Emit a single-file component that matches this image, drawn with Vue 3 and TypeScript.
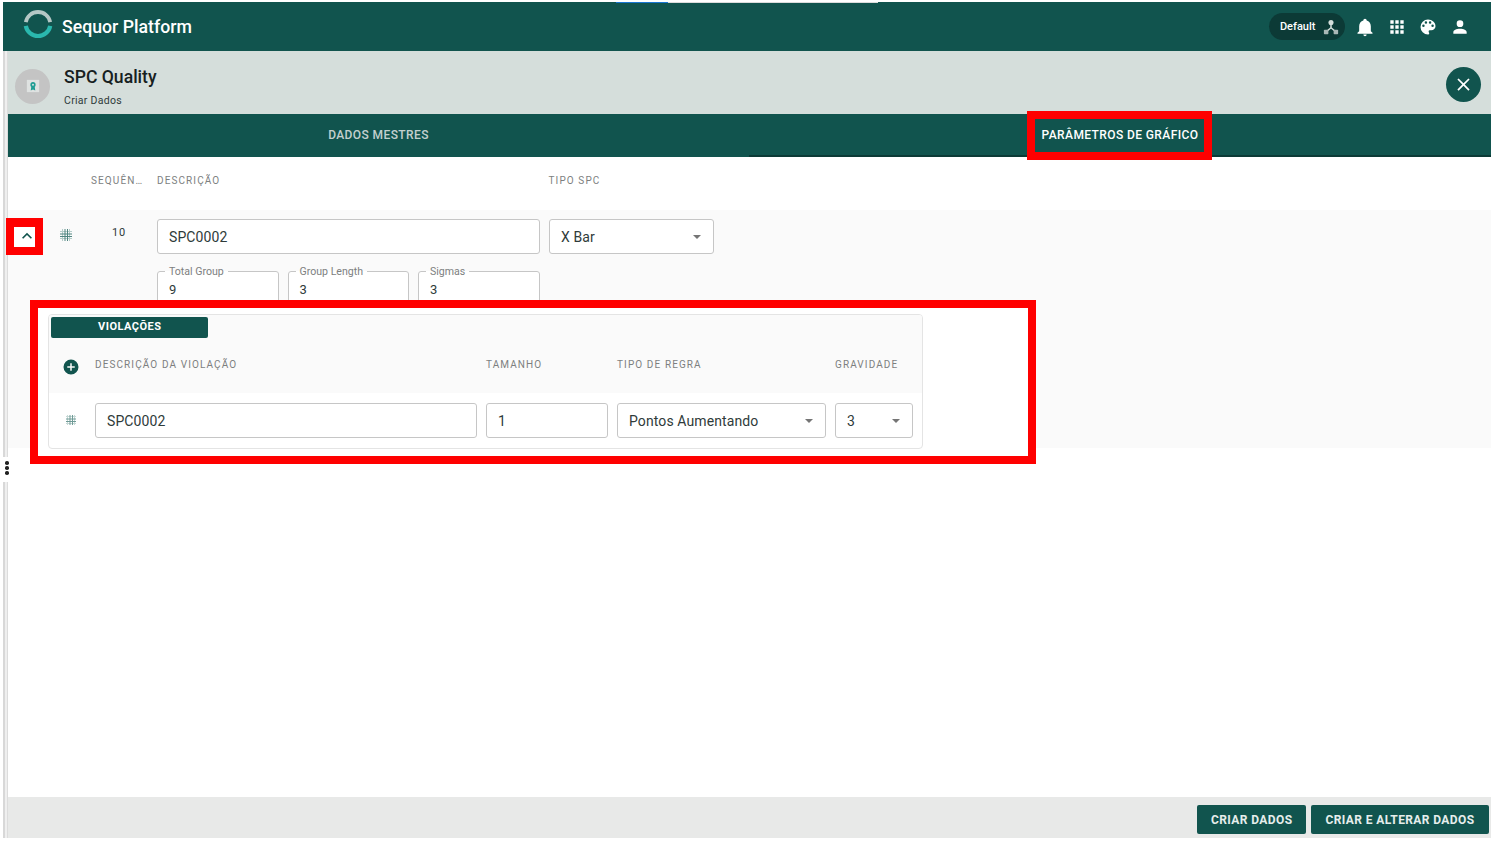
<template>
  <div class="frame">
    <span class="top-line"><i class="line-blue"></i><i class="line-grey"></i></span>

    <header class="app-bar">
      <svg class="logo" viewBox="0 0 30 30" width="30" height="30">
        <path d="M2.800 13.200A12.400 12.400 0 0 1 27.200 13.200" fill="none" stroke="#b5c7c5" stroke-width="3.800" />
        <path d="M2.800 16.800A12.400 12.400 0 0 0 27.200 16.800" fill="none" stroke="#2ab8ae" stroke-width="4.200" />
      </svg>
      <span class="brand">Sequor Platform</span>
      <div class="spacer"></div>
      <div class="env-pill">
        <span>Default</span>
        <svg viewBox="0 0 24 24" width="18" height="18">
          <path d="M12 6v7M12 13l-6 5M12 13l6 5" stroke="#d5dedb" stroke-width="2" fill="none" />
          <circle cx="12" cy="6" r="3.400" fill="#d5dedb" />
          <rect x="2.500" y="15.500" width="6" height="6" rx="1" fill="#aab8b6" />
          <rect x="15.500" y="15.500" width="6" height="6" rx="1" fill="#aab8b6" />
        </svg>
      </div>
      <svg class="bar-icon bell" viewBox="0 0 24 24"><path :d="icons.bell" /></svg>
      <svg class="bar-icon" viewBox="0 0 24 24"><path :d="icons.apps" /></svg>
      <svg class="bar-icon" viewBox="0 0 24 24"><path :d="icons.palette" /></svg>
      <svg class="bar-icon" viewBox="0 0 24 24"><path :d="icons.account" /></svg>
    </header>

    <div class="body">
      <aside class="side-strip">
        <span class="grip"><i></i><i></i><i></i></span>
      </aside>

      <main class="main">
        <section class="title-bar">
          <div class="avatar">
            <svg viewBox="0 0 16 16" width="14" height="14">
              <rect x="1" y="1" width="14" height="14" fill="#dfe2e1" />
              <circle cx="8" cy="6.500" r="3" fill="#1f9d94" />
              <path d="M6 9l-.6 4.200L8 12l2.600 1.200L10 9z" fill="#1f9d94" />
              <circle cx="8" cy="6.500" r="1.100" fill="#dfe2e1" />
            </svg>
          </div>
          <div class="titles">
            <h1>SPC Quality</h1>
            <p>Criar Dados</p>
          </div>
          <button class="close-btn" type="button">
            <svg viewBox="0 0 24 24" width="21" height="21"><path :d="icons.close" fill="#fff" /></svg>
          </button>
        </section>

        <nav class="tabs">
          <div v-for="tab in tabs" :key="tab.id" class="tab" :class="{ active: tab.id === activeTab }">
            <span class="tab-label">{{ tab.label }}</span>
          </div>
        </nav>

        <section class="content">
          <div class="table-head">
            <span class="col-seq">SEQUÊN…</span>
            <span class="col-desc">DESCRIÇÃO</span>
            <span class="col-type">TIPO SPC</span>
          </div>

          <div class="row">
            <div class="row-main">
              <div class="expand-box">
                <svg viewBox="0 0 24 24" width="20" height="20"><path :d="icons.chevronUp" fill="#11544e" /></svg>
              </div>
              <svg class="drag" viewBox="0 0 14 14" width="14" height="14">
                <path d="M3.500 1v12M10.500 1v12M1 3.500h12M1 10.500h12" stroke="#b4ccc9" stroke-width="1" fill="none" />
                <path d="M6 1v12M8.500 1v12M1 6h12M1 8.500h12" stroke="#4f8580" stroke-width="1" fill="none" />
              </svg>
              <span class="seq-value">10</span>
              <div class="field field-desc">SPC0002</div>
              <div class="field field-type">
                <span>X Bar</span>
                <span class="caret"></span>
              </div>
            </div>

            <div class="params">
              <fieldset v-for="p in params" :key="p.label" class="param">
                <legend>{{ p.label }}</legend>
                <span>{{ p.value }}</span>
              </fieldset>
            </div>

            <div class="callout">
              <div class="card">
                <div class="card-tab">VIOLAÇÕES</div>
                <div class="card-head">
                  <svg class="add" viewBox="0 0 24 24" width="18" height="18"><path :d="icons.plusCircle" fill="#11544e" /></svg>
                  <span class="v-desc">DESCRIÇÃO DA VIOLAÇÃO</span>
                  <span class="v-size">TAMANHO</span>
                  <span class="v-rule">TIPO DE REGRA</span>
                  <span class="v-grav">GRAVIDADE</span>
                </div>
                <div class="card-row">
                  <svg class="drag-small" viewBox="0 0 14 14" width="14" height="14">
                    <path d="M3.500 2v10M10.500 2v10M2 3.500h10M2 10.500h10" stroke="#c5d8d5" stroke-width="1" fill="none" />
                    <path d="M6 2v10M8.500 2v10M2 6h10M2 8.500h10" stroke="#6f9a96" stroke-width="1" fill="none" />
                  </svg>
                  <div class="field v-desc">SPC0002</div>
                  <div class="field v-size">1</div>
                  <div class="field v-rule"><span>Pontos Aumentando</span><span class="caret"></span></div>
                  <div class="field v-grav"><span>3</span><span class="caret"></span></div>
                </div>
              </div>
            </div>

            <div class="mark mark-expand"></div>
          </div>
        </section>

        <footer class="footer">
          <button type="button">CRIAR DADOS</button>
          <button type="button">CRIAR E ALTERAR DADOS</button>
        </footer>
      </main>
    </div>

    <div class="mark mark-tab"></div>
  </div>
</template>

<script setup lang="ts">
const activeTab = 'params'

const tabs = [
  { id: 'master', label: 'DADOS MESTRES' },
  { id: 'params', label: 'PARÂMETROS DE GRÁFICO' }
]

const params = [
  { label: 'Total Group', value: '9' },
  { label: 'Group Length', value: '3' },
  { label: 'Sigmas', value: '3' }
]

const icons = {
  bell: 'M21,19V20H3V19L5,17V11C5,7.9 7.03,5.17 10,4.29C10,4.19 10,4.1 10,4A2,2 0 0,1 12,2A2,2 0 0,1 14,4C14,4.1 14,4.19 14,4.29C16.97,5.17 19,7.9 19,11V17L21,19M14,21A2,2 0 0,1 12,23A2,2 0 0,1 10,21',
  apps: 'M16,20H20V16H16M16,14H20V10H16M10,8H14V4H10M16,8H20V4H16M10,14H14V10H10M4,14H8V10H4M4,20H8V16H4M10,20H14V16H10M4,8H8V4H4V8Z',
  palette: 'M17.5,12A1.5,1.5 0 0,1 16,10.5A1.5,1.5 0 0,1 17.5,9A1.5,1.5 0 0,1 19,10.5A1.5,1.5 0 0,1 17.5,12M14.5,8A1.5,1.5 0 0,1 13,6.5A1.5,1.5 0 0,1 14.5,5A1.5,1.5 0 0,1 16,6.5A1.5,1.5 0 0,1 14.5,8M9.5,8A1.5,1.5 0 0,1 8,6.5A1.5,1.5 0 0,1 9.5,5A1.5,1.5 0 0,1 11,6.5A1.5,1.5 0 0,1 9.5,8M6.5,12A1.5,1.5 0 0,1 5,10.5A1.5,1.5 0 0,1 6.5,9A1.5,1.5 0 0,1 8,10.5A1.5,1.5 0 0,1 6.5,12M12,3A9,9 0 0,0 3,12A9,9 0 0,0 12,21A1.5,1.5 0 0,0 13.5,19.5C13.5,19.11 13.35,18.76 13.11,18.5C12.88,18.23 12.73,17.88 12.73,17.5A1.5,1.5 0 0,1 14.23,16H16A5,5 0 0,0 21,11C21,6.58 16.97,3 12,3Z',
  account: 'M12,4A4,4 0 0,1 16,8A4,4 0 0,1 12,12A4,4 0 0,1 8,8A4,4 0 0,1 12,4M12,14C16.42,14 20,15.79 20,18V20H4V18C4,15.79 7.58,14 12,14Z',
  close: 'M19,6.41L17.59,5L12,10.59L6.41,5L5,6.41L10.59,12L5,17.59L6.41,19L12,13.41L17.59,19L19,17.59L13.41,12L19,6.41Z',
  chevronUp: 'M7.41,15.41L12,10.83L16.59,15.41L18,14L12,8L6,14L7.41,15.41Z',
  plusCircle: 'M17,13H13V17H11V13H7V11H11V7H13V11H17M12,2A10,10 0 0,0 2,12A10,10 0 0,0 12,22A10,10 0 0,0 22,12A10,10 0 0,0 12,2Z'
}
</script>

<style>
html,
body {
  margin: 0;
  background: #fff;
}
</style>

<style scoped>
.frame {
  position: relative;
  width: 1498px;
  height: 842px;
  box-sizing: border-box;
  padding: 2px 7px 4px 3px;
  display: flex;
  flex-direction: column;
  font-family: Roboto, "Liberation Sans", sans-serif;
  color: #2f3b3a;
  overflow: hidden;
}

.top-line {
  position: absolute;
  left: 616px;
  top: 2px;
  height: 1px;
  display: flex;
}
.line-blue {
  width: 52px;
  background: #1976d2;
}
.line-grey {
  width: 210px;
  background: #dcdcdc;
}

.app-bar {
  height: 49px;
  flex: none;
  background: #11544e;
  display: flex;
  align-items: center;
  padding: 0 21px 0 20px;
  color: #fff;
}
.logo {
  flex: none;
  margin: -5px 0 0 0;
}
.brand {
  margin-left: 9px;
  font-size: 17.700px;
  font-weight: 500;
}
.spacer {
  flex: 1;
}
.env-pill {
  height: 27px;
  width: 76px;
  box-sizing: border-box;
  border-radius: 14px;
  background: #0c3a36;
  display: flex;
  align-items: center;
  justify-content: space-between;
  padding: 0 5px 0 11px;
  font-size: 11px;
  font-weight: 500;
}
.bar-icon {
  width: 20px;
  height: 20px;
  fill: #fff;
  margin-left: 11.700px;
}
.bell {
  margin-left: 10px;
}

.body {
  flex: 1;
  min-height: 0;
  display: flex;
}
.side-strip {
  width: 5px;
  flex: none;
  background: #efefef;
  border-left: 2px solid #d8d8d8;
  border-right: 1px solid #dcdcdc;
  box-sizing: border-box;
  position: relative;
}
.grip {
  position: absolute;
  left: -2px;
  top: 406px;
  width: 8px;
  height: 25px;
  box-sizing: border-box;
  padding-bottom: 3px;
  background: #fff;
  display: flex;
  flex-direction: column;
  align-items: center;
  justify-content: center;
  gap: 1.500px;
}
.grip i {
  width: 3.500px;
  height: 3.500px;
  border-radius: 50%;
  background: #222;
}

.main {
  flex: 1;
  min-width: 0;
  display: flex;
  flex-direction: column;
}

.title-bar {
  height: 63px;
  flex: none;
  box-sizing: border-box;
  background: #d5dedb;
  display: flex;
  align-items: center;
  padding: 0 10px 0 7px;
}
.avatar {
  width: 35px;
  height: 35px;
  border-radius: 50%;
  background: #c4c4c4;
  display: flex;
  align-items: center;
  justify-content: center;
  margin-top: 7px;
}
.titles {
  margin-left: 14px;
  flex: 1;
  padding-top: 7px;
}
.titles h1 {
  margin: 0;
  font-size: 17.600px;
  line-height: 24px;
  font-weight: 500;
  color: #17211f;
}
.titles p {
  margin: 5px 0 0;
  font-size: 10.500px;
  line-height: 14px;
  letter-spacing: 0.3px;
  color: #2f3b3a;
}
.close-btn {
  width: 35px;
  height: 35px;
  border: 0;
  padding: 0;
  border-radius: 50%;
  background: #11544e;
  display: flex;
  align-items: center;
  justify-content: center;
  margin-top: 4px;
}

.tabs {
  height: 43px;
  flex: none;
  display: flex;
  background: #11544e;
}
.tab {
  flex: 0 0 741px;
  display: flex;
  align-items: center;
  justify-content: center;
  font-size: 12px;
  font-weight: 500;
  letter-spacing: 0.4px;
  color: #c3d0ce;
  box-sizing: border-box;
  padding-bottom: 2px;
}
.tab.active {
  flex: 1;
  color: #fff;
  border-bottom: 2px solid #0c3a36;
  padding-bottom: 0;
}

.content {
  flex: 1;
  min-height: 0;
  background: #fff;
}
.table-head {
  height: 53px;
  display: flex;
  align-items: center;
  font-size: 10px;
  letter-spacing: 1.100px;
  color: #7d7f7f;
  padding-bottom: 7px;
  box-sizing: border-box;
}
.col-seq {
  margin-left: 83px;
  width: 66px;
  white-space: nowrap;
}
.col-desc {
  width: 391.500px;
}

.row {
  position: relative;
  height: 238px;
  background: #fafafa;
}
.row-main {
  display: flex;
  align-items: flex-start;
  padding-top: 9px;
  height: 34px;
}
.expand-box {
  width: 21px;
  height: 20px;
  box-sizing: border-box;
  margin: 8px 0 0 6px;
  padding: 0 0 3px 4px;
  background: #fff;
  display: flex;
  align-items: center;
  justify-content: center;
  flex: none;
}
.expand-box svg {
  flex: none;
}
.drag {
  margin: 9px 0 0 24px;
  flex: none;
}
.seq-value {
  width: 30px;
  margin: 7px 0 0 39px;
  font-size: 11px;
  letter-spacing: 0.8px;
  flex: none;
}
.field {
  height: 35px;
  box-sizing: border-box;
  background: #fff;
  border: 1px solid #c6c6c6;
  border-radius: 3px;
  padding: 0 11px;
  display: flex;
  align-items: center;
  justify-content: space-between;
  font-size: 14px;
  letter-spacing: 0.1px;
  color: #2f3b3a;
}
.field-desc {
  width: 383px;
  margin-left: 15px;
  flex: none;
}
.field-type {
  width: 165px;
  margin-left: 9px;
  flex: none;
}
.caret {
  width: 0;
  height: 0;
  border-left: 4.500px solid transparent;
  border-right: 4.500px solid transparent;
  border-top: 4.500px solid #757575;
  margin-right: 1px;
}

.params {
  display: flex;
  gap: 9px;
  margin: 12px 0 0 149px;
}
.param {
  width: 121.500px;
  height: 45px;
  box-sizing: border-box;
  margin: 0;
  padding: 0 11px;
  border: 1px solid #c6c6c6;
  border-radius: 3px;
  font-size: 13px;
  line-height: 16px;
  background: #fff;
}
.param span {
  display: block;
  margin-top: 4px;
}
.param legend {
  padding: 1px 4px 0;
  margin-left: -4px;
  font-size: 10.600px;
  line-height: 12px;
  color: #7d7f7f;
}

.callout {
  position: absolute;
  left: 22px;
  top: 90px;
  width: 1006px;
  height: 164px;
  box-sizing: border-box;
  border: 8px solid #ff0000;
  background: #fff;
  padding: 6px 0 0 10px;
}
.card {
  width: 874.500px;
  height: 135px;
  box-sizing: border-box;
  border: 1px solid #e4e4e4;
  border-radius: 4px;
  background: #fff;
  overflow: hidden;
}
.card-tab {
  width: 157px;
  height: 21px;
  margin: 2px 0 0 2px;
  background: #11544e;
  border-radius: 2px;
  color: #fff;
  font-size: 11px;
  font-weight: 700;
  letter-spacing: 0.5px;
  line-height: 20px;
  padding-left: 47px;
  box-sizing: border-box;
  position: relative;
  z-index: 1;
}
.card-head {
  height: 52px;
  margin-top: -23px;
  padding: 23px 0 3px;
  box-sizing: content-box;
  background: #fafafa;
  display: flex;
  align-items: center;
  font-size: 10px;
  letter-spacing: 1.100px;
  color: #7d7f7f;
}
.card-head .add {
  margin: 5px 0 0 12.500px;
  flex: none;
}
.card-row {
  height: 55px;
  display: flex;
  align-items: center;
}
.drag-small {
  margin: -2px 0 0 15px;
  flex: none;
}
.card-head .v-desc {
  margin-left: 15.500px;
}
.card-row .v-desc {
  margin-left: 17px;
}
.v-desc {
  width: 382px;
  flex: none;
}
.v-size {
  width: 122px;
  margin-left: 9px;
  flex: none;
}
.v-rule {
  width: 209px;
  margin-left: 9px;
  flex: none;
}
.v-grav {
  width: 78px;
  margin-left: 9px;
  flex: none;
}

.mark {
  position: absolute;
  box-sizing: border-box;
  border: 8px solid #ff0000;
  pointer-events: none;
}
.mark-expand {
  left: -2px;
  top: 8px;
  width: 37px;
  height: 37px;
  border-top-width: 9px;
}
.mark-tab {
  left: 1027px;
  top: 111px;
  width: 185px;
  height: 49px;
}

.footer {
  height: 41px;
  flex: none;
  box-sizing: border-box;
  background: #e8e9e8;
  display: flex;
  align-items: center;
  justify-content: flex-end;
  gap: 5px;
  padding: 4px 2px 0 0;
}
.footer button {
  height: 29px;
  border: 0;
  border-radius: 2px;
  background: #11544e;
  color: #e6eeec;
  font-family: inherit;
  font-size: 12px;
  font-weight: 700;
  letter-spacing: 0.400px;
  padding: 0 14px;
}
.footer button:first-child {
  padding: 0 13.500px;
}
.footer button:last-child {
  padding: 0 14.500px;
}
</style>
